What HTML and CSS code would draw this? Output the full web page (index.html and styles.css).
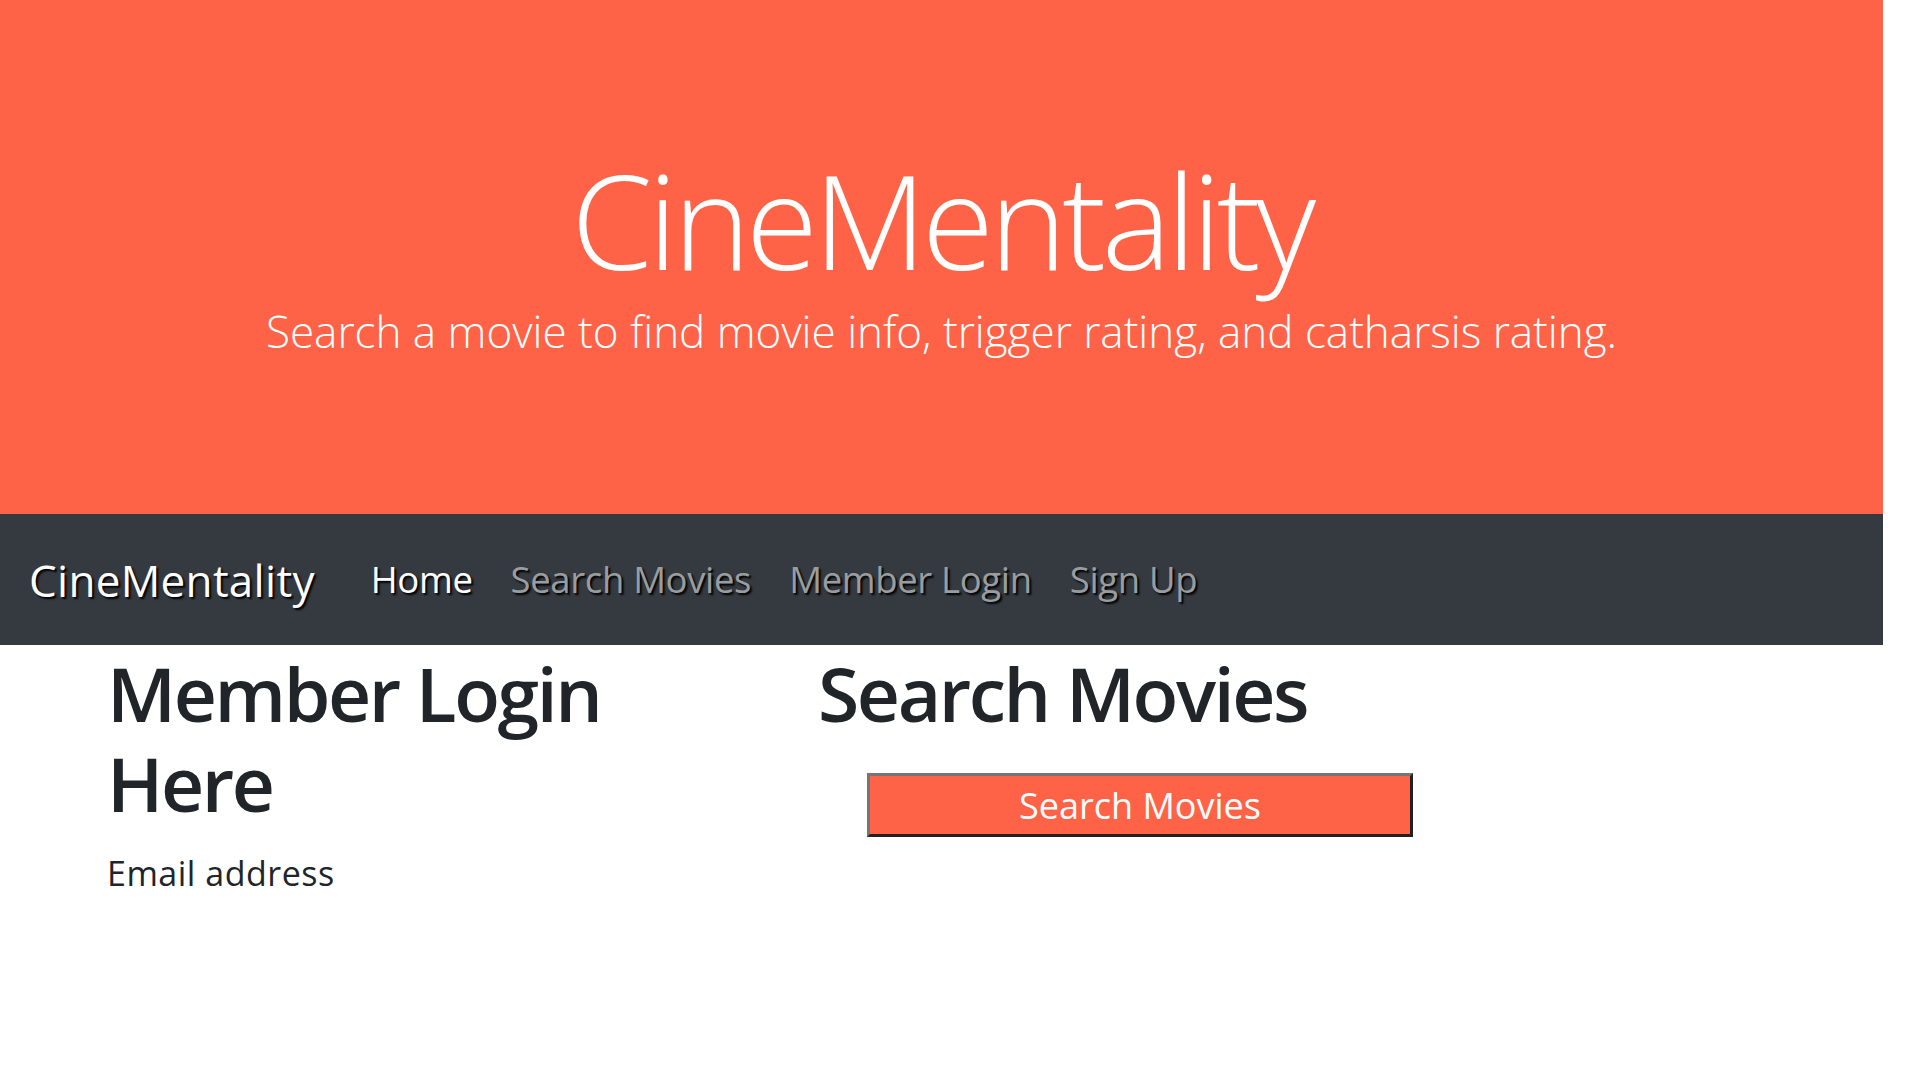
FILE: index.html
```html
<!DOCTYPE html>
<html lang="en">
<head>
<meta charset="utf-8">
<title>CineMentality</title>
<link rel="stylesheet" href="styles.css">
</head>
<body>
<div class="page">
  <header class="hero">
    <h1 class="hero-title">CineMentality</h1>
    <p class="hero-lead">Search a movie to find movie info, trigger rating, and catharsis rating.</p>
  </header>
  <nav class="navbar">
    <a class="brand" href="#">CineMentality</a>
    <ul class="nav-links">
      <li><a class="nav-link active" href="#">Home</a></li>
      <li><a class="nav-link" href="#">Search Movies</a></li>
      <li><a class="nav-link" href="#">Member Login</a></li>
      <li><a class="nav-link" href="#">Sign Up</a></li>
    </ul>
  </nav>
  <main class="content">
    <section class="col col-login">
      <h1 class="heading">Member Login Here</h1>
      <label class="field-label">Email address</label>
    </section>
    <section class="col col-search">
      <h1 class="heading">Search Movies</h1>
      <button class="search-btn" type="button">Search Movies</button>
    </section>
  </main>
</div>
</body>
</html>
```
FILE: styles.css
```css
* { box-sizing: border-box; }
html, body { margin: 0; padding: 0; background: #fff; }
body {
  font-family: "Open Sans", "Noto Sans", sans-serif;
  color: #212529;
}
.page { width: 1883px; }

.hero {
  height: 514px;
  background: #ff6347;
  color: #fff;
  text-align: center;
  padding-top: 141px;
}
.hero-title {
  margin: 0;
  font-weight: 300;
  font-size: 131px;
  line-height: 157px;
  letter-spacing: -4.5px;
}
.hero-lead {
  margin: 0;
  font-weight: 300;
  font-size: 44px;
  line-height: 66px;
  letter-spacing: 0;
}

.navbar {
  height: 131px;
  background: #343a40;
  display: flex;
  align-items: center;
  padding-left: 29px;
}
.brand {
  color: #fff;
  text-decoration: none;
  font-size: 44px;
  line-height: 1.5;
  letter-spacing: 0.3px;
  text-shadow: 2px 2px 2px #000;
  margin-right: 56px;
}
.nav-links {
  list-style: none;
  margin: 0;
  padding: 0;
  display: flex;
  gap: 38px;
}
.nav-link {
  color: #9a9da0;
  text-decoration: none;
  font-size: 36.5px;
  line-height: 1.5;
  letter-spacing: -0.35px;
  text-shadow: 2px 2px 2px #000;
}
.nav-link.active { color: #fff; }

.content {
  display: flex;
  padding-left: 107px;
  gap: 91px;
}
.col-login { width: 620px; }
.heading {
  margin: 3px 0 0;
  font-size: 75px;
  font-weight: 600;
  line-height: 90px;
  letter-spacing: -2.4px;
}
.field-label {
  display: block;
  margin-top: 20px;
  font-size: 34px;
  line-height: 1.5;
  letter-spacing: 0.5px;
}
.search-btn {
  display: block;
  margin: 35px 0 0 49px;
  width: 546px;
  height: 64px;
  background: #ff6347;
  color: #fff;
  font-family: "Open Sans", "Noto Sans", sans-serif;
  font-size: 36px;
  letter-spacing: 0;
  border-style: solid;
  border-width: 3px;
  border-color: #767676 #222 #222 #767676;
  padding: 0;
}
```
